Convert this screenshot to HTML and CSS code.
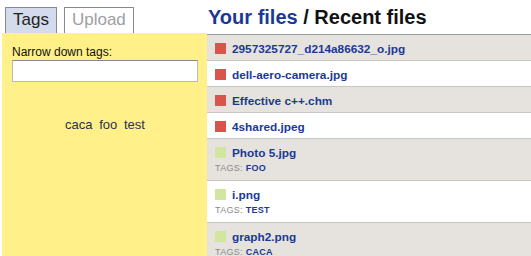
FILE: index.html
```html
<!DOCTYPE html>
<html lang="en">
<head>
  <meta charset="UTF-8" />
  <title>Your files</title>
  <link rel="stylesheet" href="styles.css">
</head>
<body>
  <div class="container">
    <aside class="sidebar">
      <div class="tabs">
        <a href="#" class="tab active">Tags</a>
        <a href="#" class="tab">Upload</a>
      </div>
      <div class="tag-panel">
        <label class="filter-label" for="filtro">Narrow down tags:</label>
        <input type="text" id="filtro" class="filter-input">
        <div class="tag-cloud">
          <a href="#">caca</a>
          <a href="#">foo</a>
          <a href="#">test</a>
        </div>
      </div>
    </aside>

    <main class="files">
      <h1><span class="your">Your files</span> / Recent files</h1>
      <ul class="file-list">
        <li class="file"><span class="icon red"></span><a href="#">2957325727_d214a86632_o.jpg</a></li>
        <li class="file"><span class="icon red"></span><a href="#">dell-aero-camera.jpg</a></li>
        <li class="file"><span class="icon red"></span><a href="#">Effective c++.chm</a></li>
        <li class="file"><span class="icon red"></span><a href="#">4shared.jpeg</a></li>
        <li class="file"><span class="icon green"></span><a href="#">Photo 5.jpg</a>
          <div class="tags">Tags: <a href="#">foo</a></div></li>
        <li class="file"><span class="icon green"></span><a href="#">i.png</a>
          <div class="tags">Tags: <a href="#">test</a></div></li>
        <li class="file"><span class="icon green"></span><a href="#">graph2.png</a>
          <div class="tags">Tags: <a href="#">caca</a></div></li>
      </ul>
    </main>
  </div>
</body>
</html>
```

FILE: styles.css
```css
:root {
  --azul: #1b3994;
  --amarelo: #fff08a;
  --cinza-linha: #e6e3de;
  --borda: #c8c6c2;
}

* {
  margin: 0;
  padding: 0;
  box-sizing: border-box;
}

body {
  font-family: 'Liberation Sans', Arial, sans-serif;
  background-color: #fff;
  color: #222;
}

.container {
  display: flex;
  height: 100vh;
  overflow: hidden;
}

.sidebar {
  width: 205px;
  margin-left: 2px;
  display: flex;
  flex-direction: column;
}

.tabs {
  display: flex;
  gap: 7px;
  padding: 7px 0 0 3px;
  height: 33px;
}

.tab {
  display: block;
  height: 26px;
  padding: 2px 7px 0 7px;
  border: 1px solid #8a8a8a;
  border-bottom: none;
  font-size: 17px;
  color: #a0a0a0;
  text-decoration: none;
  background-color: #fff;
}

.tab.active {
  background-color: #d3dbec;
  color: #222;
}

.tag-panel {
  flex: 1;
  background-color: var(--amarelo);
  padding: 11px 9px 0 10px;
}

.filter-label {
  display: block;
  font-size: 12px;
  line-height: 16px;
  color: #111;
}

.filter-input {
  display: block;
  width: 186px;
  height: 22px;
  border: 1px solid #bbb;
  border-top-color: #888;
  background: #fff;
}

.tag-cloud {
  text-align: center;
  padding-top: 35px;
  font-size: 13px;
  word-spacing: 3px;
}

.tag-cloud a {
  color: #2a3050;
  text-decoration: none;
}

.files {
  flex: 1;
}

.files h1 {
  height: 35px;
  padding: 7px 0 0 1px;
  font-size: 20px;
  line-height: 20px;
  color: #111;
  border-bottom: 1px solid #9a9a9a;
}

.files h1 .your {
  color: var(--azul);
}

.file-list {
  list-style: none;
}

.file {
  padding: 7px 0 4px 8px;
  border-bottom: 1px solid var(--borda);
  background-color: var(--cinza-linha);
  font-size: 11.8px;
  line-height: 14px;
}

.file:nth-child(even) {
  background-color: #fff;
}

.file > a {
  color: var(--azul);
  font-weight: bold;
  text-decoration: none;
}

.icon {
  display: inline-block;
  width: 11px;
  height: 11px;
  margin-right: 6px;
  vertical-align: -1px;
}

.icon.red {
  background-color: #d9544b;
}

.icon.green {
  background-color: #d3e6a0;
}

.tags {
  font-size: 9px;
  line-height: 12px;
  margin-top: 2px;
  color: #8a8a8a;
  text-transform: uppercase;
  letter-spacing: 0.3px;
  padding-bottom: 2px;
}

.tags a {
  color: var(--azul);
  font-weight: bold;
  text-decoration: none;
}
```
